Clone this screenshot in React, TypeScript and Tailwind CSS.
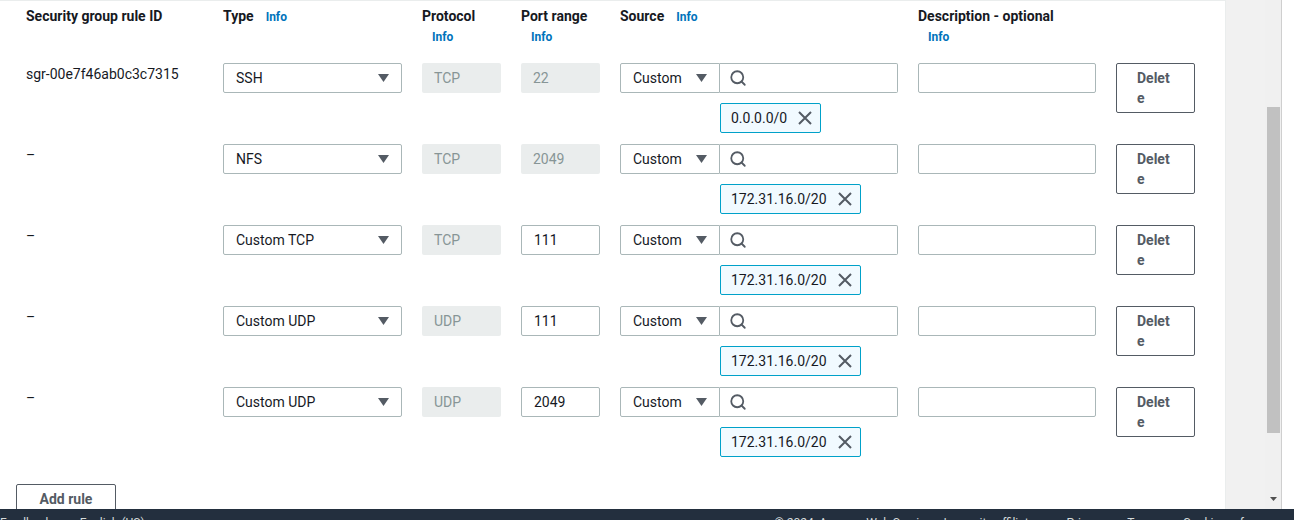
import { Search } from 'lucide-react';

type Rule = {
  id: string;
  type: string;
  protocol: string;
  port: string;
  portEditable: boolean;
  cidr: string;
};

const rules: Rule[] = [
  { id: 'sgr-00e7f46ab0c3c7315', type: 'SSH', protocol: 'TCP', port: '22', portEditable: false, cidr: '0.0.0.0/0' },
  { id: '–', type: 'NFS', protocol: 'TCP', port: '2049', portEditable: false, cidr: '172.31.16.0/20' },
  { id: '–', type: 'Custom TCP', protocol: 'TCP', port: '111', portEditable: true, cidr: '172.31.16.0/20' },
  { id: '–', type: 'Custom UDP', protocol: 'UDP', port: '111', portEditable: true, cidr: '172.31.16.0/20' },
  { id: '–', type: 'Custom UDP', protocol: 'UDP', port: '2049', portEditable: true, cidr: '172.31.16.0/20' },
];

const cols = 'grid grid-cols-[197px_199px_99px_99px_298px_198px_79px]';

/** Small filled caret used by the selects */
function Caret() {
  return (
    <svg width="11" height="8" viewBox="0 0 11 8" className="shrink-0">
      <path d="M0 0 L11 0 L5.5 8 Z" fill="#545b64" />
    </svg>
  );
}

function Info() {
  return <span className="text-[12px] font-bold text-[#0073bb]">Info</span>;
}

/** Column header with optional Info link, inline or on a second line */
function Header({ label, info }: { label: string; info?: 'inline' | 'below' }) {
  return (
    <div className="flex flex-col">
      <div className="flex items-baseline gap-3 leading-5">
        <span className="text-[14px] font-bold text-[#16191f]">{label}</span>
        {info === 'inline' && <Info />}
      </div>
      {info === 'below' && (
        <div className="pl-[10px] leading-5">
          <Info />
        </div>
      )}
    </div>
  );
}

function RuleRow({ rule }: { rule: Rule }) {
  return (
    <div className={cols}>
      <div className="pt-[1px] leading-5 text-[14px] text-[#16191f]">{rule.id}</div>

      <div>
        <div className="flex h-[30px] w-[179px] items-center justify-between rounded-[2px] border border-[#aab7b8] pl-3 pr-3 text-[14px] text-[#16191f]">
          <span>{rule.type}</span>
          <Caret />
        </div>
      </div>

      <div>
        <div className="flex h-[30px] w-[79px] items-center rounded-[2px] bg-[#eaeded] pl-3 text-[14px] text-[#879596]">
          {rule.protocol}
        </div>
      </div>

      <div>
        {rule.portEditable ? (
          <div className="flex h-[30px] w-[79px] items-center rounded-[2px] border border-[#aab7b8] pl-3 text-[14px] text-[#16191f]">
            {rule.port}
          </div>
        ) : (
          <div className="flex h-[30px] w-[79px] items-center rounded-[2px] bg-[#eaeded] pl-3 text-[14px] text-[#879596]">
            {rule.port}
          </div>
        )}
      </div>

      <div className="flex flex-col">
        <div className="flex h-[30px]">
          <div className="flex w-[100px] items-center justify-between rounded-l-[2px] border border-[#aab7b8] pl-3 pr-3 text-[14px] text-[#16191f]">
            <span>Custom</span>
            <Caret />
          </div>
          <div className="flex w-[178px] items-center rounded-r-[2px] border border-l-0 border-[#aab7b8] pl-[9px]">
            <Search size={18} strokeWidth={2.4} color="#545b64" />
          </div>
        </div>
        <div className="mt-[10px] ml-[100px] flex">
          <div className="flex h-[30px] items-center gap-[10px] rounded-[2px] border border-[#00a1c9] bg-[#f1faff] pl-[10px] pr-[7px] text-[14px] text-[#16191f]">
            <span>{rule.cidr}</span>
            <svg width="16" height="16" viewBox="0 0 16 16">
              <path d="M2 2 L14 14 M14 2 L2 14" stroke="#545b64" strokeWidth="2" />
            </svg>
          </div>
        </div>
      </div>

      <div>
        <div className="h-[30px] w-[178px] rounded-[2px] border border-[#aab7b8]" />
      </div>

      <div>
        <div className="h-[50px] w-[79px] rounded-[2px] border border-[#545b64] pl-[20px] pr-[17px] pt-[4px] text-[14px] leading-5 font-bold text-[#545b64] break-all">
          Delete
        </div>
      </div>
    </div>
  );
}

export default function App() {
  return (
    <div className="flex h-[520px] w-[1294px] flex-col overflow-hidden bg-white font-['Roboto',sans-serif]">
      <div className="flex h-[509px] overflow-hidden">
        <div className="flex w-[1226px] flex-col border-t border-r border-[#eaeded] pt-[5px]">
          <div className={`${cols} pl-[26px]`}>
            <Header label="Security group rule ID" />
            <Header label="Type" info="inline" />
            <Header label="Protocol" info="below" />
            <Header label="Port range" info="below" />
            <Header label="Source" info="inline" />
            <Header label="Description - optional" info="below" />
            <div />
          </div>

          <div className="mt-[16px] flex flex-col gap-[11px] pl-[26px]">
            {rules.map((rule, i) => (
              <RuleRow key={i} rule={rule} />
            ))}
          </div>

          <div className="mt-[27px] ml-[16px]">
            <div className="flex h-[32px] w-[100px] items-start justify-center rounded-[2px] border border-[#545b64] pt-[4px] text-[14px] font-bold text-[#545b64]">
              Add rule
            </div>
          </div>
        </div>

        <div className="flex w-[56px] border-r border-[#cfcfcf] bg-[#f1f1f1]">
          <div className="flex-1" />
          <div className="flex w-[16px] flex-col items-center bg-[#f0f0f0]">
            <div className="h-[107px]" />
            <div className="h-[326px] w-[13px] bg-[#c1c1c1]" />
            <div className="flex-1" />
            <svg width="7" height="4" viewBox="0 0 7 4" className="mb-[8px]">
              <path d="M0 0 L7 0 L3.5 4 Z" fill="#505050" />
            </svg>
          </div>
        </div>
        <div className="flex-1 bg-white" />
      </div>

      <div className="flex h-[11px] items-start justify-between overflow-hidden bg-[#232f3e] pt-[6px] text-[12px] leading-4 text-[#d5dbdb]">
        <div className="flex gap-[28px]">
          <span>Feedback</span>
          <span>English (US)</span>
        </div>
        <div className="flex gap-[22px] pr-[8px]">
          <span>© 2024, Amazon Web Services, Inc. or its affiliates.</span>
          <span>Privacy</span>
          <span>Terms</span>
          <span>Cookie preferences</span>
        </div>
      </div>
    </div>
  );
}
